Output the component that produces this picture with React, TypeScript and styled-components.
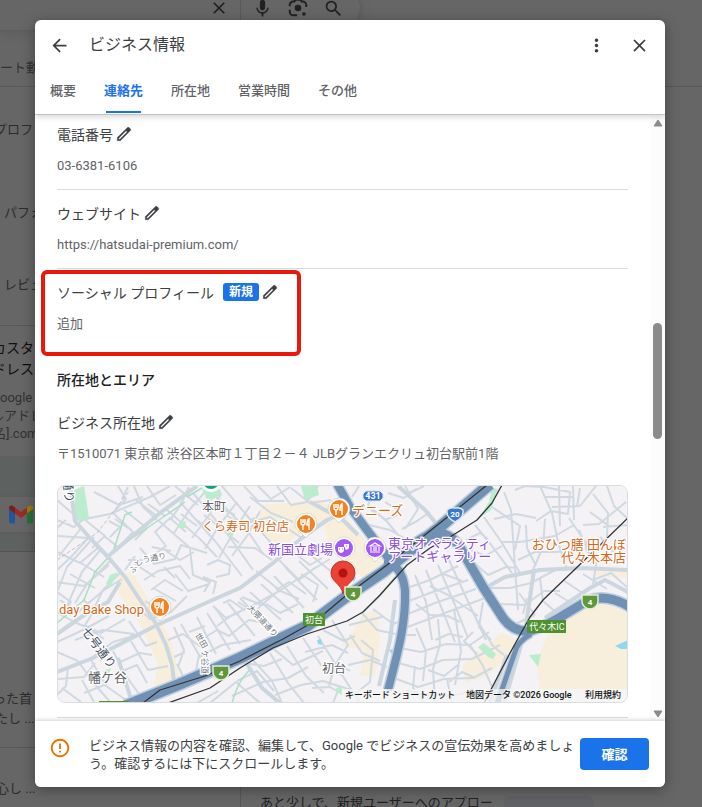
import React from "react";
import styled, { createGlobalStyle, css } from "styled-components";
import { MdArrowBack, MdClose, MdErrorOutline, MdMic, MdMoreVert, MdSearch } from "react-icons/md";

const GlobalStyle = createGlobalStyle`
  * { box-sizing: border-box; }
  body { margin: 0; background: #666; font-family: Roboto, "Noto Sans CJK JP", sans-serif; }
  button { font: inherit; border: 0; padding: 0; background: none; cursor: pointer; }
`;

const Page = styled.div`
  position: relative;
  height: 100vh;
  overflow: hidden;
  color: #2a2b2d;
`;

/* ---------- page behind the dialog ---------- */

const Backdrop = styled.div`
  height: 100%;
  display: flex;
  flex-direction: column;
`;

const TopBar = styled.div`
  flex: none;
  display: flex;
  height: 87px;
  border-bottom: 1px solid #585858;
  align-items: flex-start;
`;

const SearchPill = styled.div`
  display: flex;
  align-items: center;
  width: 361px;
  height: 46px;
  margin-top: -15px;
  padding-right: 16px;
  gap: 14px;
  justify-content: flex-end;
  border-radius: 0 23px 23px 0;
  border: 1px solid #5d5d5d;
  border-left: 0;
  box-shadow: 0 2px 8px #5558;
  color: #212121;
`;

const PillDivider = styled.span`
  width: 1px;
  height: 32px;
  background: #595959;
  margin: 0 -3px;
`;

const BackColumns = styled.div`
  flex: 1;
  display: flex;
  min-height: 0;
`;

const Rail = styled.div`
  width: 241px;
  flex: none;
  border-right: 1px solid #575757;
  white-space: nowrap;
`;

const RailLine = styled.div<{ $h: number; $shift?: number; $tone?: "strong" | "soft" }>`
  height: ${(p) => p.$h}px;
  line-height: ${(p) => p.$h}px;
  margin-left: ${(p) => p.$shift ?? 0}px;
  font-size: 13px;
  ${(p) => p.$tone === "strong" && css`font-size: 14px; color: #0e0f10;`}
  ${(p) => p.$tone === "soft" && css`color: #303234;`}
`;

const RailGap = styled.div<{ $h: number; $rule?: boolean }>`
  height: ${(p) => p.$h}px;
  border-bottom: ${(p) => (p.$rule ? "1px solid #575757" : "0")};
`;

const NavPeek = styled.div`
  width: 361px;
  margin-left: -361px;
  padding-top: 58px;
  font-size: 13px;
  line-height: 20px;
  color: #303234;
`;

const Promo = styled.div`
  height: 96px;
  padding-top: 41px;
  background: #5d6160;
  border-bottom: 1px solid #525454;
`;

const PromoCard = styled.div`
  height: 35px;
  padding: 8px 9px;
  background: #666;
  box-shadow: 0 0 3px #5558;
`;

const Feed = styled.div`
  flex: 1;
  display: flex;
  align-items: flex-end;
  gap: 11px;
  padding-left: 19px;
  font-size: 13px;
  line-height: 14px;
  color: #202122;
`;

const FeedText = styled.span`
  height: 11px;
`;

const FeedChip = styled.span`
  width: 90px;
  height: 11px;
  border-radius: 8px 8px 0 0;
  background: #606164;
`;

/* ---------- dialog ---------- */

const Dialog = styled.section`
  position: absolute;
  inset: 20px 37px 20px 35px;
  display: flex;
  flex-direction: column;
  overflow: hidden;
  border-radius: 6px;
  background: #fff;
  box-shadow: 0 3px 14px rgba(0, 0, 0, 0.35);
`;

const Header = styled.header`
  position: relative;
  flex: none;
  border-bottom: 1px solid #c4c6c8;
  box-shadow: 0 2px 6px rgba(0, 0, 0, 0.16);
`;

const TitleBar = styled.div`
  display: flex;
  align-items: center;
  height: 49px;
  padding: 0 16px 0 14px;
`;

const Title = styled.h1`
  flex: 1;
  margin: 0 0 0 20px;
  font-size: 16px;
  line-height: 24px;
  font-weight: 400;
  color: #3c4043;
`;

const IconButton = styled.button`
  display: grid;
  place-items: center;
  width: 20px;
  height: 20px;
  color: #3c4043;
  & + & { margin-left: 23px; }
`;

const Tabs = styled.nav`
  display: flex;
  gap: 28px;
  height: 45px;
  padding-left: 15px;
`;

const Tab = styled.button<{ $active?: boolean }>`
  position: relative;
  padding-bottom: 4px;
  font-size: 13px;
  font-weight: 500;
  color: ${(p) => (p.$active ? "#1a73e8" : "#5f6368")};
  ${(p) =>
    p.$active &&
    css`
      font-weight: 700;
      &::after {
        content: "";
        position: absolute;
        inset: auto 2px 1px;
        height: 2px;
        background: #1a73e8;
      }
    `}
`;

const Body = styled.div`
  flex: 1;
  min-height: 0;
  display: flex;
  overflow: hidden;
`;

const Content = styled.main`
  flex: 1;
  min-width: 0;
  margin-top: -4px;
  padding: 0 22px;
`;

const Field = styled.section<{ $rule?: boolean }>`
  position: relative;
  padding: 13px 0;
  border-bottom: ${(p) => (p.$rule ? "1px solid #dadce0" : "0")};
`;

const FieldTitle = styled.h2`
  display: flex;
  align-items: center;
  gap: 2px;
  height: 20px;
  margin: 0 0 12px;
  font-size: 14px;
  font-weight: 400;
  color: #3c4043;
`;

const FieldValue = styled.p`
  margin: 0;
  line-height: 20px;
  font-size: 13px;
  color: #5f6368;
`;

const SectionTitle = styled.h2`
  margin: 23px 0 9px;
  font-size: 14px;
  line-height: 20px;
  font-weight: 500;
  color: #202124;
`;

const Badge = styled.span`
  margin-left: 7px;
  padding: 0 6px;
  border-radius: 3px;
  background: #1a73e8;
  color: #fff;
  font-size: 12px;
  font-weight: 700;
  line-height: 18px;
`;

const EditButton = styled.button`
  display: grid;
  color: #3c4043;
`;

const Highlight = styled.span`
  position: absolute;
  top: 1px;
  left: -16px;
  width: 260px;
  height: 86px;
  border: 4px solid #e8180c;
  border-radius: 6px;
  pointer-events: none;
`;

const MapFrame = styled.div`
  height: 218px;
  margin: 21px 0 1px;
  overflow: hidden;
  border: 1px solid #dadce0;
  border-radius: 8px;
  svg { display: block; width: 100%; height: 100%; }
`;

const Scrollbar = styled.div`
  flex: none;
  display: flex;
  flex-direction: column;
  align-items: center;
  width: 15px;
  padding: 4px 0 3px;
  background: #fcfcfc;
`;

const Track = styled.div`
  flex: 1;
  width: 9px;
  display: grid;
  grid-template-rows: 197fr 116fr 272fr;
`;

const Thumb = styled.div`
  grid-row: 2;
  border-radius: 5px;
  background: #8b8b8b;
`;

const Footer = styled.footer`
  position: relative;
  flex: none;
  display: flex;
  padding: 16px 16px 14px 14px;
  background: #fff;
  box-shadow: 0 -1px 4px rgba(0, 0, 0, 0.18);
`;

const FooterIcon = styled.span`
  display: flex;
  align-items: flex-start;
  width: 40px;
  flex: none;
  color: #e37400;
`;

const FooterText = styled.p`
  flex: 1;
  margin: 0;
  font-size: 13px;
  line-height: 18px;
  color: #3c4043;
`;

const Confirm = styled.button`
  && { background: #1a73e8; }
  flex: none;
  width: 69px;
  height: 32px;
  margin: 1px 0 0 4px;
  padding-bottom: 2px;
  border-radius: 4px;
  color: #fff;
  font-size: 13px;
  font-weight: 700;
`;

/* ---------- drawings ---------- */

const Pencil = () => (
  <EditButton aria-label="編集">
    <svg width="18" height="18" viewBox="0 0 24 24" fill="currentColor">
      <path fillRule="evenodd" stroke="currentColor" strokeWidth=".4" d="M20.41 4.94l-1.35-1.35c-.78-.78-2.05-.78-2.83 0L3 16.82V21h4.18L20.41 7.77c.79-.78.79-2.05 0-2.83zM6.41 19.06L5 19v-1.36l9.82-9.82 1.41 1.41z" />
    </svg>
  </EditButton>
);

const Lens = () => (
  <svg width="22" height="22" viewBox="0 0 24 24" fill="none" stroke="currentColor" strokeWidth="2.2">
    <path d="M3 10V8a4 4 0 0 1 4-3h1l1-2h6l1 2h1a4 4 0 0 1 4 4v2M3 14v2a4 4 0 0 0 4 4h4" />
    <circle cx="12" cy="12" r="3.6" fill="currentColor" stroke="none" />
    <circle cx="18.5" cy="18.5" r="2" fill="currentColor" stroke="none" />
  </svg>
);

const Gmail = () => (
  <svg width="24" height="19" viewBox="0 0 24 18">
    <path d="M0 3v13a2 2 0 0 0 2 2h4V7z" fill="#27539b" />
    <path d="M24 3v13a2 2 0 0 1-2 2h-4V7z" fill="#24733a" />
    <path d="M18 2v6l6-4.5V2.3C24 0 21.5-.8 19.8.6z" fill="#a37a0a" />
    <path d="M6 8V2l6 4.5L18 2v6l-6 4.5z" fill="#9b2b24" />
    <path d="M0 2.3v1.2L6 8V2L4.2.6C2.5-.8 0 0 0 2.3z" fill="#7c1f1a" />
  </svg>
);

const MINOR_ROADS = `
M57 500L80 520L110 514L150 497L170 486M57 520L74 527L84 519L105 536L92 548M118 486L126 499L113 513L133 532L118 548M134 486L143 507L157 520M94 492L119 505L143 497
M57 536L88 538L72 556L57 570M66 520L57 528M57 552L80 563L99 547M82 527L59 556M94 537L67 567L58 590M102 548L82 572L67 606M110 561L87 584L75 603M120 573L103 590L92 613
M57 582L84 586L109 565M60 600L78 612L104 590L122 579M70 574L95 588M79 562L104 577M57 612L74 622L101 633L125 619M83 599L94 611L85 625L104 639M57 592L71 602L61 616
M104 536L118 547L132 535M124 510L147 528L135 540M136 500L158 517M115 519L128 528M147 486L160 505L176 495M148 504L165 516M109 521L120 527L110 537M128 487L122 499
M57 652L78 661L92 681L110 702M75 640L103 630L134 634L121 643M94 656L113 642L130 637M91 660L106 686L126 700M113 651L126 676L142 698M57 679L84 677L95 663M68 667L66 686L57 695M62 688L81 702M82 680L94 702M110 653L100 661M106 678L137 665L147 683M131 641L148 670L168 666M118 663L140 653L152 655M84 693L107 684
M140 548L154 564L175 559L181 545L207 553M128 560L147 560L166 546L155 532L170 518L186 532M144 580L158 571L180 566L190 579M151 590L165 580L183 591M135 564L155 577M125 570L135 556M166 551L180 560L194 552M190 549L193 575L210 582L204 592M164 567L175 578M152 547L171 551
M166 509L200 539L217 557M180 502L215 541L242 576M193 493L229 536L253 570M159 521L189 547M207 486L224 506L247 530L264 555M222 486L249 518L280 553M175 486L198 505M189 487L180 506L170 520M205 492L190 509L174 533M221 494L209 515L192 538M237 502L218 527L205 549M250 506L234 531L219 558M260 511L247 536L232 556M181 514L197 526M204 515L221 528L239 543
M203 577L216 582L213 594M207 565L218 560L230 565L229 574L216 577M197 520L208 528M226 515L242 525L255 518M211 504L235 515M244 486L258 501L284 501M258 486L271 499L290 487M277 486L291 505L307 502L318 486M291 488L310 503L331 500M250 497L271 513L293 522M247 523L270 517L302 538M228 547L255 548L272 560
M174 627L184 650L178 667M181 624L199 655L196 671M197 617L216 654M207 613L230 650M216 609L240 644M228 603L255 636M240 598L269 629M250 592L281 620M261 584L293 613M274 576L304 608M285 567L317 600M299 561L328 589M313 557L338 577M168 640L183 634L201 647M177 664L184 678M185 652L174 657M204 638L217 630L229 636L249 620L271 624M217 626L232 615L250 607L281 590L304 575L330 559M199 657L222 645L251 640M242 597L262 605L274 594M256 571L278 589L289 582L306 594M189 632L205 626M213 606L226 618L240 612M279 560L299 580M288 548L310 565L322 558
M57 642L83 630L109 616M129 621L146 646L157 642M137 607L150 619L171 612L187 596M145 601L160 610M153 588L176 601M175 574L188 591L209 584
M238 602L255 613L261 605M266 604L280 613L298 604M276 589L299 599M301 574L318 585L313 602M299 580L316 567M223 603L230 600L243 609
M237 681L257 671L274 691M252 659L272 681L282 703M270 653L288 683L304 703M287 646L306 676L324 693M303 638L321 665L342 675L360 703M318 636L334 662L350 671M210 703L236 682L260 703M197 703L218 691M232 696L263 682L288 678L308 667M243 663L264 666L282 659M275 695L301 685L323 681L351 690M269 645L293 665L323 651M323 630L344 641L355 636M350 635L362 653L380 661M348 665L370 660L387 667M305 652L332 645L348 653M332 620L348 645L335 665L329 686M362 613L377 630L400 635M361 640L373 650L370 682L356 693M312 688L330 687L342 694M333 703L339 688M349 625L382 617M373 609L393 624L406 619
M410 587L430 580L458 566M409 601L430 593L468 580M408 614L435 603L476 589M405 628L429 619L485 598M400 648L421 652L446 644L470 645L489 632M395 662L420 669L443 660L472 659L500 645M394 678L418 687L444 679L473 678L492 668M415 575L426 602L432 640M426 570L444 614L455 642M438 565L455 605L468 638M449 560L465 595L486 640M416 628L426 651L423 681M438 619L440 644L433 669L435 702M454 609L461 651L455 685M407 635L416 635M470 645L483 666L492 687M477 620L493 646L504 655M415 666L413 688L424 703M405 690L423 694L449 696L476 691L489 697M447 679L452 703M430 586L448 595L478 616M441 573L462 581M416 604L430 615L448 616L460 622M473 632L464 641L477 654M428 670L444 676L458 665M475 678L462 672L449 682M483 602L479 627L491 640M435 640L449 634L463 637
M405 486L418 509L405 529M388 493L404 498L416 489M359 486L352 497M374 490L368 505L385 520L397 515M385 502L400 511M369 525L390 530L409 541M407 494L424 486M402 529L417 521L430 512M392 540L405 551L423 543M371 510L385 519L398 535
M475 525L492 546L512 573M484 517L502 543L520 573M492 507L520 526L515 550M504 492L511 510L518 610M494 519L516 514L536 518M502 542L520 542L555 536L574 525M518 560L535 552L558 552L588 541M540 486L552 513L558 542L567 570M523 486L544 487L570 492L568 514L551 511L536 521M559 486L560 526M573 486L574 520M544 497L574 497M552 507L580 506L596 486M580 488L577 507M593 494L608 513L607 537M607 486L614 506L627 518M583 525L599 524L626 502M590 512L609 526M603 527L627 525M600 537L614 552L628 558M579 530L588 552L597 559L593 584M490 588L510 588L531 583L557 569M500 604L525 605L544 591L560 591M519 593L535 615M513 625L535 615M527 598L523 614M540 579L543 601L559 615M555 593L571 603M563 580L584 594M583 574L607 589M593 580L611 573L628 588M472 561L488 575L506 567L518 568M469 549L485 556L502 546M466 540L480 533L488 539M515 490L525 486M526 525L527 548L536 566M545 519L543 547L532 572M569 518L588 546
`;

const ROADS = [
  "M70 485L75 521L90 538L108 557L125 577L140 600L155 622L166 645L172 665L175 690",
  "M57 672L93 658L157 625L217 598L240 588L273 563L303 537L327 520L350 510",
  "M57 634L87 613L108 602L120 582M106 558L160 513L197 486",
  "M487 587L505 577L540 570L580 568L628 570",
  "M545 618L590 588L605 580L628 592M398 486L425 510L450 540M485 486L465 500L445 522",
  "M118 658L132 702M240 653L262 688L280 703M358 535L342 519L310 502",
  "M395 600L390 640L379 686M507 655L490 703M534 570L525 632L504 703",
];

const BLUE_ROADS: { d: string; w: number }[] = [
  { d: "M125 706L180 684L240 658L307 626L343 599L383 572L440 527L490 484", w: 11 },
  { d: "M337 484L350 507L367 530L390 560", w: 8 },
  { d: "M384 562Q402 564 405 590C406 620 400 645 388 690", w: 8 },
  { d: "M405 553C425 532 446 524 461 549L483 587L503 618Q514 633 530 631Q549 625 567 613L587 601Q606 593 630 607", w: 9 },
  { d: "M531 634Q517 642 515 652L497 704", w: 5 },
];

const RAILWAYS = [
  "M143 703L160 690L205 676L240 661L283 639L317 620L343 598L387 565L440 523L487 485",
  "M168 703L210 688L240 668L273 648L307 634L347 621L363 612L380 595L407 565L430 548L450 537L477 520L492 503L502 485",
  "M628 518L597 548L543 600L530 617L510 653L484 703",
];

const PIN = "M-11 0a11 11 0 1 1 22 0c0 7-7 8-11 14c-4-6-11-7-11-14z";

const Fork = () => (
  <path d="M-5-5v4q0 2 2 2v5M-3-5v4M-1-5v4q0 2-2 2M3 6v-11q-2 1-2 6h2" fill="none" stroke="#fff" strokeWidth="1.5" />
);

const Poi = ({ x, y, fill, children }: { x: number; y: number; fill: string; children: React.ReactNode }) => (
  <g transform={`translate(${x} ${y})`}>
    <path d={PIN} fill="#fff" stroke="#bbb" strokeWidth=".5" />
    <circle r="9" fill={fill} />
    {children}
  </g>
);

const Shield = ({ x, y }: { x: number; y: number }) => (
  <g transform={`translate(${x} ${y})`}>
    <path d="M-8-7H8V0Q7 6 0 7Q-7 6-8 0z" fill="#5e9838" stroke="#e4eddc" strokeWidth="1.5" />
    <text y="3" fontSize="8" fontWeight="700" fill="#fff" textAnchor="middle">4</text>
  </g>
);

const MapLabel = styled.text<{ $kind?: "food" | "culture" | "road" | "avenue"; $small?: boolean }>`
  font-size: ${(p) => (p.$small ? 12 : 13)}px;
  fill: #5f6368;
  stroke: #fff;
  stroke-width: 2.5px;
  stroke-linejoin: round;
  paint-order: stroke;
  ${(p) => p.$kind === "food" && css`fill: #d5691b;`}
  ${(p) => p.$kind === "culture" && css`fill: #8a4be0;`}
  ${(p) => p.$kind === "avenue" && css`font-size: 12px; fill: #3f4c5f;`}
  ${(p) => p.$kind === "road" && css`font-size: 8px; fill: #72787d;`}
`;

const Credit = styled.text`
  font-size: 9px;
  font-weight: 500;
  fill: #111;
`;

const AreaMap = () => (
  <svg viewBox="58 486 569 216" preserveAspectRatio="xMidYMid slice" role="img" aria-label="地図">
    <rect x="0" y="400" width="702" height="400" fill="#f4f2f4" />
    <g fill="#f7efdc">
      <path d="M550 630L587 607Q608 595 628 610V690H540L537 660z" />
      <path d="M262 505L320 500L340 512L386 562L364 579L330 548L322 521L278 548L257 528z" />
      <path d="M116 577L132 572L152 605L171 640L180 680L151 697L158 665L142 627L119 594z" />
      <path d="M362 615L377 610L380 640L375 676L360 676L364 650L341 646L354 630z" />
      <path d="M502 633L516 639L508 658L483 678L466 683L462 666L478 652z" />
      <path d="M592 572L628 570V578L597 576z" />
    </g>
    <path d={MINOR_ROADS} fill="none" stroke="#d0d9e1" strokeWidth="2" strokeLinejoin="round" />
    <g fill="#b9edcd">
      <path d="M74 490L84 486L89 518L76 521z" />
      <path d="M202 489L218 486L222 494L208 502z" />
      <path d="M301 486H317L319 495L305 500z" />
      <path d="M478 647L484 643L496 654L493 659L488 657z" />
      <path d="M529 655L541 654L538 667z" />
      <path d="M492 488L498 489L491 510L478 519L489 502z" />
      <path d="M110 575L118 572L111 586L106 584zM179 523L186 521L185 528L178 528zM228 532L238 529L229 537zM103 671L111 668L108 676z" />
      <circle cx="339" cy="690" r="3" />
    </g>
    <path d="M615 646L628 640V649H621zM351 578L356 577L354 582zM317 640L321 639L322 645L318 644zM389 650L393 649L392 654z" fill="#8fd9f0" />
    <path d="M232 703Q239 678 252 668M395 577L379 597L363 612M187 497L205 486M57 623L84 600L95 572L113 552L125 515L132 512M113 551L159 520L185 502" fill="none" stroke="#a9dfc1" strokeWidth="1.5" />
    <path d="M57 560L97 533L130 490" fill="none" stroke="#bfc3c9" strokeWidth="1" strokeDasharray="4 2" />
    <g fill="none" stroke="#cbd6df" strokeWidth="4" strokeLinejoin="round">
      {ROADS.map((d) => <path key={d} d={d} />)}
    </g>
    <g fill="none" strokeLinejoin="round">
      {BLUE_ROADS.map((r) => <path key={r.d} d={r.d} stroke="#c0d0df" strokeWidth={r.w + 3} />)}
      {BLUE_ROADS.map((r) => <path key={r.d} d={r.d} stroke="#7091b4" strokeWidth={r.w} />)}
      {RAILWAYS.map((d) => <path key={d} d={d} stroke="#333" strokeWidth="1.3" />)}
    </g>

    <circle cx="211" cy="481" r="11" fill="#fff" />
    <circle cx="211" cy="481" r="8" fill="#16a078" />
    <rect x="99" y="701" width="30" height="8" fill="#559030" />

    <MapLabel $small x="202" y="511">本町</MapLabel>
    <MapLabel $small x="322" y="673">初台</MapLabel>
    <MapLabel x="88" y="682">幡ケ谷</MapLabel>
    <MapLabel $kind="avenue" transform="translate(81 631) rotate(53)">七号通り</MapLabel>
    <MapLabel $kind="avenue" transform="translate(63 479) rotate(84)">通り</MapLabel>
    <MapLabel $kind="road" transform="translate(133 574) rotate(-52)">ふと</MapLabel>
    <MapLabel $kind="road" transform="translate(143 563) rotate(-12)">う通り</MapLabel>
    <MapLabel $kind="road" transform="translate(247 608) rotate(47)">大隈道通り</MapLabel>
    <MapLabel $kind="road" transform="translate(195 635) rotate(60)">世田</MapLabel>
    <MapLabel $kind="road" transform="translate(202 650) rotate(90)">ケ谷道</MapLabel>

    <MapLabel $kind="food" $small x="202" y="531">くら寿司 初台店</MapLabel>
    <MapLabel $kind="food" x="352" y="515">デニーズ</MapLabel>
    <MapLabel $kind="food" x="59" y="614">day Bake Shop</MapLabel>
    <MapLabel $kind="food" x="626" y="549" textAnchor="end">おひつ膳 田んぼ</MapLabel>
    <MapLabel $kind="food" x="626" y="562" textAnchor="end">代々木本店</MapLabel>
    <MapLabel $kind="culture" x="268" y="554">新国立劇場</MapLabel>
    <MapLabel $kind="culture" x="388" y="548">東京オペラシティ</MapLabel>
    <MapLabel $kind="culture" x="388" y="561">アートギャラリー</MapLabel>

    <Poi x={306} y={524} fill="#f58220"><Fork /></Poi>
    <Poi x={339} y={509} fill="#f58220"><Fork /></Poi>
    <Poi x={160} y={607} fill="#f58220"><Fork /></Poi>
    <Poi x={344} y={548} fill="#a259f7">
      <path d="M-6-1h6v4q-3 4-6 0zM0-4h5v4q-2 3-4 1v-2h-1z" fill="#fff" />
      <path d="M-5 1h1M-2 1h1M2-2h1" stroke="#a259f7" />
    </Poi>
    <Poi x={375} y={548} fill="#a259f7">
      <path d="M-5-2L0-5L5-2zM-4-1V3M-1-1V3M1-1V3M4-1V3M-5 4H5" fill="none" stroke="#fff" strokeWidth="1.2" />
    </Poi>

    <g transform="translate(373 496)">
      <path d="M-10-2L-7-5H7L10-2V2L7 5H-7L-10 2z" fill="#3a78c9" stroke="#dce8f6" />
      <text y="3" fontSize="9" fontWeight="700" fill="#fff" textAnchor="middle">431</text>
    </g>
    <g transform="translate(455 514)">
      <path d="M-8-4Q-5-7 0-6Q5-7 8-4Q9 4 0 8Q-9 4-8-4z" fill="#3a78c9" stroke="#dce8f6" strokeWidth="1.5" />
      <text y="3" fontSize="8" fontWeight="700" fill="#fff" textAnchor="middle">20</text>
    </g>

    <rect x="303" y="613" width="22" height="13" fill="#4f912f" />
    <text x="314" y="623" fontSize="9" fill="#fff" textAnchor="middle">初台</text>
    <rect x="527" y="620" width="39" height="13" fill="#4f912f" />
    <text x="547" y="630" fontSize="9" fill="#fff" textAnchor="middle">代々木IC</text>
    <Shield x={221} y={673} />
    <Shield x={590} y={602} />

    <path d="M343 594C341 583 331 582 331 573a12 12 0 0 1 24 0c0 9-10 10-12 21z" fill="#ea4335" stroke="#c5362b" />
    <circle cx="343" cy="573" r="4.5" fill="#b31412" />
    <Shield x={353} y={594} />

    <rect x="342" y="689" width="286" height="14" fill="#f5f5f5" opacity=".75" />
    <Credit x="345" y="698">キーボード ショートカット</Credit>
    <Credit x="466" y="698">地図データ ©2026 Google</Credit>
    <Credit x="585" y="698">利用規約</Credit>
  </svg>
);

const TABS = ["概要", "連絡先", "所在地", "営業時間", "その他"];

export default function App() {
  return (
    <Page>
      <GlobalStyle />
      <Backdrop aria-hidden="true">
        <TopBar>
          <SearchPill>
            <MdClose size={20} />
            <PillDivider />
            <MdMic size={21} />
            <Lens />
            <MdSearch size={21} />
          </SearchPill>
          <NavPeek>ート動</NavPeek>
        </TopBar>
        <BackColumns>
          <Rail>
            <RailLine $h={86} $shift={-6}>プロファ</RailLine>
            <RailLine $h={80} $shift={4}>パフォ</RailLine>
            <RailLine $h={64} $shift={4}>レビュ</RailLine>
            <RailGap $h={9} $rule />
            <RailGap $h={12} />
            <RailLine $h={21} $shift={-8} $tone="strong">カスタ</RailLine>
            <RailLine $h={21} $shift={-8} $tone="strong">ドレス</RailLine>
            <RailGap $h={9} />
            <RailLine $h={18} $tone="soft">oogle</RailLine>
            <RailLine $h={18} $shift={-9} $tone="soft">ルアドレ</RailLine>
            <RailLine $h={18} $shift={-7} $tone="soft">名].com</RailLine>
            <RailGap $h={13} />
            <Promo><PromoCard><Gmail /></PromoCard></Promo>
            <RailGap $h={137} />
            <RailLine $h={20} $shift={-7}>った首</RailLine>
            <RailLine $h={20} $shift={-5}>たし ...</RailLine>
            <RailGap $h={19} $rule />
            <RailGap $h={31} />
            <RailLine $h={20} $shift={-4}>心し ...</RailLine>
          </Rail>
          <Feed>
            <FeedText>あと少しで、新規ユーザーへのアプロー</FeedText>
            <FeedChip />
          </Feed>
        </BackColumns>
      </Backdrop>

      <Dialog role="dialog" aria-label="ビジネス情報">
        <Header>
          <TitleBar>
            <IconButton aria-label="戻る"><MdArrowBack size={21} /></IconButton>
            <Title>ビジネス情報</Title>
            <IconButton aria-label="メニュー"><MdMoreVert size={21} /></IconButton>
            <IconButton aria-label="閉じる"><MdClose size={21} /></IconButton>
          </TitleBar>
          <Tabs>
            {TABS.map((t) => <Tab key={t} $active={t === "連絡先"}>{t}</Tab>)}
          </Tabs>
        </Header>

        <Body>
          <Content>
            <Field $rule>
              <FieldTitle>電話番号<Pencil /></FieldTitle>
              <FieldValue>03-6381-6106</FieldValue>
            </Field>
            <Field $rule>
              <FieldTitle>ウェブサイト<Pencil /></FieldTitle>
              <FieldValue>https://hatsudai-premium.com/</FieldValue>
            </Field>
            <Field>
              <FieldTitle>ソーシャル プロフィール<Badge>新規</Badge><Pencil /></FieldTitle>
              <FieldValue>追加</FieldValue>
              <Highlight />
            </Field>
            <SectionTitle>所在地とエリア</SectionTitle>
            <Field $rule>
              <FieldTitle>ビジネス所在地<Pencil /></FieldTitle>
              <FieldValue>〒1510071 東京都 渋谷区本町１丁目２－４ JLBグランエクリュ初台駅前1階</FieldValue>
              <MapFrame><AreaMap /></MapFrame>
            </Field>
          </Content>
          <Scrollbar aria-hidden="true">
            <svg width="10" height="8"><path d="M1 7L5 1L9 7z" fill="#8b8b8b" stroke="#8b8b8b" strokeLinejoin="round" /></svg>
            <Track><Thumb /></Track>
            <svg width="10" height="8"><path d="M1 1L5 7L9 1z" fill="#8b8b8b" stroke="#8b8b8b" strokeLinejoin="round" /></svg>
          </Scrollbar>
        </Body>

        <Footer>
          <FooterIcon><MdErrorOutline size={22} /></FooterIcon>
          <FooterText>
            ビジネス情報の内容を確認、編集して、Google でビジネスの宣伝効果を高めましょう。確認するには下にスクロールします。
          </FooterText>
          <Confirm>確認</Confirm>
        </Footer>
      </Dialog>
    </Page>
  );
}
